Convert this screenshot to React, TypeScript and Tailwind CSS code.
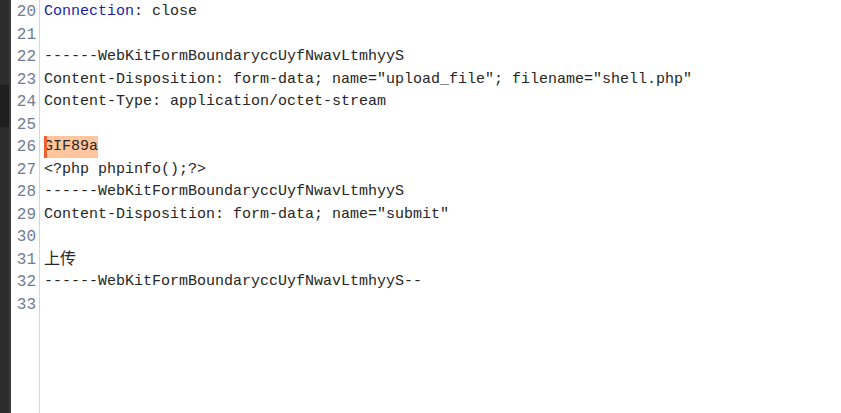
import React from "react";

type Line = { n: number; text?: React.ReactNode };

const LINES: Line[] = [
  {
    n: 20,
    text: (
      <>
        <span className="text-[#1c1ca8]">Connection</span>: close
      </>
    ),
  },
  { n: 21 },
  { n: 22, text: "------WebKitFormBoundaryccUyfNwavLtmhyyS" },
  {
    n: 23,
    text: 'Content-Disposition: form-data; name="upload_file"; filename="shell.php"',
  },
  { n: 24, text: "Content-Type: application/octet-stream" },
  { n: 25 },
  {
    n: 26,
    text: (
      <span className="relative inline-block h-[22px] bg-[#ffc59c] pr-[0px] align-top leading-[22.5px]">
        <span className="absolute left-0 top-0 bottom-0 w-[3px] bg-[#ef5f2f]" />
        GIF89a
      </span>
    ),
  },
  { n: 27, text: "<?php phpinfo();?>" },
  { n: 28, text: "------WebKitFormBoundaryccUyfNwavLtmhyyS" },
  { n: 29, text: 'Content-Disposition: form-data; name="submit"' },
  { n: 30 },
  { n: 31, text: <span className="text-[16px]">上传</span> },
  { n: 32, text: "------WebKitFormBoundaryccUyfNwavLtmhyyS--" },
  { n: 33 },
];

export default function App() {
  return (
    <div
      className="flex h-[413px] w-[841px] overflow-hidden bg-white text-[15px] text-[#262626]"
      style={{ fontFamily: '"Liberation Mono", "Noto Sans CJK SC", monospace' }}
    >
      {/* left dark strip */}
      <div className="flex w-[11px] flex-col border-r-2 border-[#3b3b3b]">
        <div className="h-[85px] bg-[#2c2c2c]" />
        <div className="h-[42px] bg-[#1f1f1f]" />
        <div className="flex-1 bg-[#2c2c2c]" />
      </div>

      {/* gutter */}
      <div className="w-[29px] border-r border-[#d6d6d6] pt-[1px]">
        {LINES.map((l) => (
          <div key={l.n} className="h-[22.5px] pr-[3px] text-right text-[16px] leading-[22.5px] text-[#6f7c93]">
            {l.n}
          </div>
        ))}
      </div>

      {/* editor */}
      <div className="flex-1 pl-[4px] pt-[1px]">
        {LINES.map((l) => (
          <div key={l.n} className="h-[22.5px] whitespace-pre leading-[22.5px]">
            {l.text ?? ""}
          </div>
        ))}
      </div>
    </div>
  );
}
